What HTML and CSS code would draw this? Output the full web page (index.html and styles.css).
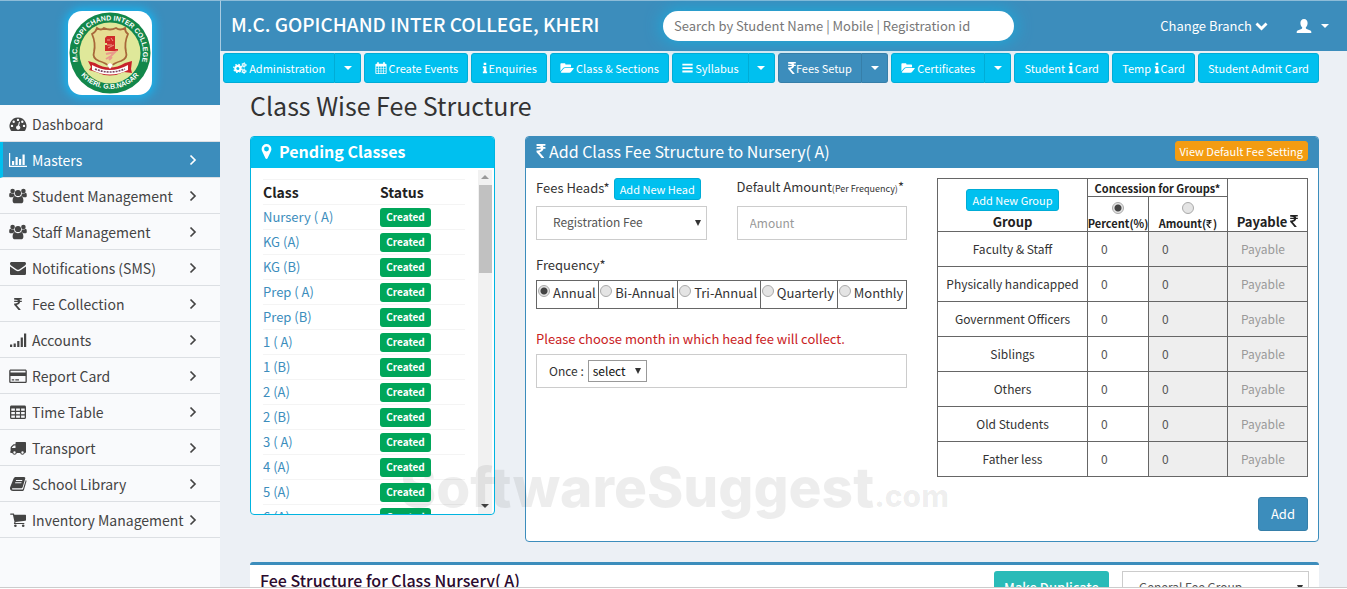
FILE: index.html
```
<!DOCTYPE html>
<html lang="en">
<head>
  <meta charset="UTF-8" />
  <meta name="viewport" content="width=device-width, initial-scale=1.0"/>
  <title>Class Wise Fee Structure</title>
  <link rel="stylesheet" href="styles.css">
</head>
<body>

  <!-- Icon set -->
  <svg class="sprite" aria-hidden="true">
    <symbol id="i-dashboard" viewBox="0 0 18 16"><path fill-rule="evenodd" d="M9 1.5a8.5 8.5 0 0 0-7.2 13c.2.3.4.5.8.5h12.800c.4 0 .6-.2.800-.5A8.500 8.500 0 0 0 9 1.500zM9 2.700a1.200 1.200 0 1 1 0 2.400 1.200 1.200 0 0 1 0-2.400zM4.700 4.500a1.200 1.200 0 1 1 0 2.400 1.200 1.200 0 0 1 0-2.400zM13.300 4.500a1.200 1.200 0 1 1 0 2.400 1.200 1.200 0 0 1 0-2.400zM3 8.700a1.200 1.200 0 1 1 0 2.400 1.200 1.200 0 0 1 0-2.400zM15 8.700a1.200 1.200 0 1 1 0 2.400 1.200 1.200 0 0 1 0-2.400zM10 5.600l1 .3-.9 3.800a2.100 2.100 0 1 1-1.100-.2z"/></symbol>
    <symbol id="i-chart" viewBox="0 0 18 16"><path d="M0 1h1.200v12.800H18V15H0zM3 9h2.200v4H3zM6.500 5h2.200v8H6.500zM10 7h2.200v6H10zM13.500 2.500h2.200V13h-2.200z"/></symbol>
    <symbol id="i-users" viewBox="0 0 18 16"><circle cx="3.600" cy="3" r="2.300"/><circle cx="14.400" cy="3" r="2.300"/><circle cx="9" cy="5" r="3.100"/><path d="M5.200 5.600A4 4 0 0 0 6 8.300c-1 0-1.800.4-2.400 1H2C.8 9.300.2 8.700.2 7.700c0-1.700.3-3 1.300-3 .4 0 1 .8 2.100.8zM12.800 5.600A4 4 0 0 1 12 8.300c1 0 1.800.4 2.400 1H16c1.200 0 1.800-.6 1.800-1.600 0-1.700-.3-3-1.300-3-.4 0-1 .8-2.100.8zM6.300 8.300c.4 0 1.200 1 2.700 1s2.300-1 2.700-1c2 0 2.700 2 2.700 4.400 0 1.700-1 2.600-2.400 2.600H6c-1.400 0-2.400-.9-2.400-2.600 0-2.400.7-4.400 2.700-4.400z"/></symbol>
    <symbol id="i-mail" viewBox="0 0 18 16"><path d="M1 3.600C1 2.700 1.700 2 2.600 2h12.800c.9 0 1.600.7 1.600 1.600 0 .9-.6 1.700-1.400 2.200l-5 3.500c-1 .7-2.200.7-3.200 0l-5-3.500C1.600 5.300 1 4.500 1 3.600zM1 6.500l5.900 4.100c1.300.9 2.900.9 4.200 0L17 6.500v6.900c0 .9-.7 1.600-1.600 1.600H2.600c-.9 0-1.600-.7-1.600-1.600z"/></symbol>
    <symbol id="i-rupee" viewBox="0 128 900 1408"><path d="M898 470v102q0 14-9 23t-23 9h-168q-23 144-129 234t-276 110q167 178 459 536 14 16 4 34-8 18-29 18h-195q-16 0-25-12-306-367-498-571-9-9-9-22v-127q0-13 9.500-22.500t22.500-9.500h112q132 0 212.500-43t102.500-125h-427q-14 0-23-9t-9-23v-102q0-14 9-23t23-9h413q-57-113-268-113h-145q-13 0-22.500-9.500t-9.500-22.500v-133q0-14 9-23t23-9h832q14 0 23 9t9 23v102q0 14-9 23t-23 9h-233q47 61 64 144h171q14 0 23 9t9 23z"/></symbol>
    <symbol id="i-signal" viewBox="0 0 18 16"><path d="M1 12.500h2.200V15H1zM4.600 11.500h2.200V15H4.600zM8.200 9h2.200v6H8.200zM11.700 5.500h2.200V15h-2.200zM15 1.500h2.200V15H15z"/></symbol>
    <symbol id="i-card" viewBox="0 0 18 16"><path fill-rule="evenodd" d="M1.800 1.500h14.400c.9 0 1.600.7 1.600 1.600v10.300c0 .9-.7 1.600-1.600 1.600H1.800c-.9 0-1.600-.7-1.600-1.600V3.100c0-.9.700-1.600 1.600-1.600zM1.500 2.800v1.700h15V2.800zM1.500 8v5.700h15V8zM2.700 11.300h2.500v1.200H2.700zM6.300 11.300H10v1.200H6.300z"/></symbol>
    <symbol id="i-table" viewBox="0 0 18 16"><path fill-rule="evenodd" d="M2.500 1.500h13c.9 0 1.500.6 1.500 1.500v10.500c0 .9-.6 1.500-1.500 1.500h-13c-.9 0-1.500-.6-1.500-1.500V3c0-.9.600-1.500 1.500-1.500zM2.300 4.600v2.200h3.600V4.600zM7.100 4.600v2.200h3.800V4.600zM12.100 4.600v2.200h3.600V4.600zM2.300 8v2.200h3.600V8zM7.100 8v2.200h3.800V8zM12.100 8v2.200h3.600V8zM2.300 11.400v2.300h3.600v-2.300zM7.100 11.400v2.300h3.800v-2.300zM12.100 11.400v2.300h3.600v-2.300z"/></symbol>
    <symbol id="i-truck" viewBox="0 0 18 16"><path fill-rule="evenodd" d="M7.500 2H16c.6 0 1 .4 1 1v9c0 .7-.5.900-1.300.9a2.300 2.300 0 0 1-4.500 0H7.800a2.300 2.300 0 0 1-4.500 0c-1 0-2.300 0-2.300-.9 0-.4.600-.5.600-.7V8c0-.5.200-1 .6-1.400l1.800-1.800c.4-.4.800-.5 1.300-.5h1.200V3c0-.6.400-1 1-1zM2.900 8h3.600V5.500H5.200c-.3 0-.4.100-.5.200L3.100 7.300c-.2.200-.2.400-.2.700zM5.500 11.300a1.200 1.200 0 1 0 0 2.400 1.200 1.200 0 0 0 0-2.400zM13.500 11.300a1.200 1.200 0 1 0 0 2.400 1.200 1.200 0 0 0 0-2.400z"/></symbol>
    <symbol id="i-book" viewBox="0 0 18 16"><path fill-rule="evenodd" d="M6.800 1h8.300c.9 0 1.400.8 1.100 1.700l-2.500 8.200c-.2.800-.9 1.300-1.700 1.300H3.500c-.4 0-.6.400-.5.700.2.500.6.700 1.300.7h8.900c.4 0 .7-.2.800-.6l2.800-9.100c.6.300.8 1 .6 1.700L15 13.700c-.2.800-1 1.300-1.800 1.300H4c-1.400 0-2.700-1-3-2.300-.1-.6 0-1 .2-1.600L4.600 2.600C4.900 1.600 5.800 1 6.800 1zM7.100 4l-.3 1h6.300l.3-1zM6.300 6.200l-.3 1h6.300l.3-1z"/></symbol>
    <symbol id="i-cart" viewBox="0 0 18 16"><path d="M1.700 1.500h2.700c.6 0 .8.500.9 1.300h11.100c.4 0 .6.300.6.700v4.600c0 .4-.3.700-.6.700L6.400 10c.1.300.1.600 0 .9h8.400c.9 0 .9 1.200 0 1.200H5.600c-.7 0-.8-.5-.6-1l.5-1.200L3.900 2.700H1.700c-.9 0-.9-1.200 0-1.200z"/><circle cx="6.400" cy="13.800" r="1.300"/><circle cx="14.200" cy="13.800" r="1.300"/></symbol>
    <symbol id="i-right" viewBox="0 0 8 12"><path d="M1.500 1.500L6 6l-4.500 4.500" fill="none" stroke="currentColor" stroke-width="1.700"/></symbol>
    <symbol id="i-cogs" viewBox="0 0 16 14"><g fill="none" stroke="currentColor"><circle cx="5.500" cy="7.500" r="3" stroke-width="2.400"/><circle cx="5.500" cy="7.500" r="4.700" stroke-width="1.500" stroke-dasharray="1.850 1.840"/><circle cx="12.600" cy="3.500" r="1.500" stroke-width="1.500"/><circle cx="12.600" cy="3.500" r="2.600" stroke-width="1" stroke-dasharray="1.360"/><circle cx="12.600" cy="10.800" r="1.500" stroke-width="1.500"/><circle cx="12.600" cy="10.800" r="2.600" stroke-width="1" stroke-dasharray="1.360"/></g></symbol>
    <symbol id="i-calendar" viewBox="0 0 14 14"><path fill-rule="evenodd" d="M1.500 2h1V1c0-1.200 2-1.200 2 0v1h5V1c0-1.200 2-1.200 2 0v1h1c.6 0 1 .4 1 1v10c0 .6-.4 1-1 1h-11c-.6 0-1-.4-1-1V3c0-.6.400-1 1-1zM1.500 5.300v1.900h2V5.300zM4.300 5.300v1.900h2.300V5.300zM7.400 5.300v1.900h2.300V5.300zM10.500 5.300v1.900h2V5.300zM1.500 8v2.100h2V8zM4.300 8v2.100h2.300V8zM7.400 8v2.100h2.300V8zM10.500 8v2.100h2V8zM1.500 10.900V13h2v-2.100zM4.300 10.900V13h2.300v-2.100zM7.400 10.900V13h2.300v-2.100zM10.500 10.900V13h2v-2.100z"/></symbol>
    <symbol id="i-info" viewBox="0 0 6 14"><path d="M1.500 1h3v2.600h-3zM.5 5h4v6h1v2h-5v-2h1V7h-1z"/></symbol>
    <symbol id="i-folder" viewBox="0 0 16 14"><path d="M1.500 1.500h3.500c.7 0 1.200.5 1.200 1.200V3h5.300c.7 0 1.200.5 1.200 1.200V6H5.600c-.8 0-1.600.4-2.100 1L.3 10.800V2.700c0-.7.500-1.200 1.200-1.200zM5.600 7h9.600c.7 0 .9.400.5.900l-3 3.800c-.4.500-1.100.8-1.700.8H1.400c-.6 0-.9-.4-.4-1l3-3.700c.4-.5 1-.8 1.600-.8z"/></symbol>
    <symbol id="i-bars" viewBox="0 0 12 14"><path d="M0 2h12v2.200H0zM0 6h12v2.200H0zM0 10h12v2.200H0z"/></symbol>
    <symbol id="i-pin" viewBox="0 0 10 16"><path fill-rule="evenodd" d="M5 1a4.600 4.600 0 0 1 4.600 4.600c0 .7-.1 1.300-.4 1.900L6 14.300c-.4.900-1.600.9-2 0L.8 7.500C.5 6.900.4 6.300.4 5.600A4.600 4.600 0 0 1 5 1zM5 3.300a2.300 2.300 0 1 0 0 4.600 2.300 2.300 0 0 0 0-4.600z"/></symbol>
    <symbol id="i-down" viewBox="0 0 14 14"><path d="M2.300 3L7 7.700 11.700 3 14 5.300l-7 7-7-7z"/></symbol>
    <symbol id="i-user" viewBox="0 0 16 16"><path d="M8 1c2.300 0 3.600 1.700 3.600 4 0 1.700-.7 3.300-1.700 4.200-.3.800 0 1.300.8 1.700l3.600 1.600c.7.300 1 .8 1 1.600v.9H.7v-.9c0-.8.300-1.300 1-1.600l3.600-1.600c.8-.4 1.100-.9.8-1.700C5.100 8.300 4.400 6.700 4.400 5c0-2.300 1.300-4 3.600-4z"/></symbol>
    <symbol id="i-caret" viewBox="0 0 8 4"><path d="M0 0h8L4 4z"/></symbol>
  </svg>

  <div class="page">

    <!-- Sidebar -->
    <aside class="sidebar">
      <div class="brand">
        <svg class="logo" viewBox="0 0 84 84" role="img" aria-label="College logo">
          <defs>
            <path id="arc-top" d="M11 53.600A33 33 0 1 1 73 53.600"/>
            <path id="arc-bottom" d="M6 52A38 38 0 0 0 78 52"/>
          </defs>
          <circle cx="42" cy="42" r="40.500" fill="#12874a"/>
          <circle cx="42" cy="42" r="30.500" fill="#dfe89a"/>
          <text class="logo-text"><textPath href="#arc-top" startOffset="50%" text-anchor="middle">M.C. GOPI CHAND INTER COLLEGE</textPath></text>
          <text class="logo-text"><textPath href="#arc-bottom" startOffset="50%" text-anchor="middle">KHERI. G.B.NAGAR</textPath></text>
          <path d="M29 17q4 3 7 0q6 3 12 0q4 3 9 0q0 4 3 6q-4 9-2 18q2 6-5 9q-7 2-11 6q-4-4-11-6q-7-3-5-9q2-9-2-18q4-2 5-6z" fill="#e6dc92" stroke="#a8683a" stroke-width="1.800"/>
          <path d="M37 27l2-2h8v13h3v2H37v-6h2v-2h-2z" fill="#cf2a2a"/>
          <path d="M39 29h3M43 27l2 3M39 34h5M40 37l6-3" stroke="#eba08a" fill="none"/>
          <path d="M38 43l9-2-4 4-5 3M41 49l3-3" stroke="#e99a8c" stroke-width="2" fill="none"/>
          <path d="M20 50l7 2q15 9 30 0l7-2-1 8 1 4-8-1q-14 7-28 0l-7-2 2-3z" fill="#c7222c"/>
          <path d="M24 54q18 10 36 0v5q-18 9-36 0z" fill="#fff"/>
          <path d="M27 58q15 6 30 0" fill="none" stroke="#7b4562" stroke-width="1.600" stroke-dasharray="2 1"/>
          <path d="M39 54l3-2 3 2-3 4z" fill="#fff"/>
        </svg>
      </div>
      <nav class="menu">
        <a href="#"><svg class="icon"><use href="#i-dashboard"/></svg>Dashboard</a>
        <a href="#" class="active"><svg class="icon"><use href="#i-chart"/></svg>Masters<svg class="arrow"><use href="#i-right"/></svg></a>
        <a href="#"><svg class="icon"><use href="#i-users"/></svg>Student Management<svg class="arrow"><use href="#i-right"/></svg></a>
        <a href="#"><svg class="icon"><use href="#i-users"/></svg>Staff Management<svg class="arrow"><use href="#i-right"/></svg></a>
        <a href="#"><svg class="icon"><use href="#i-mail"/></svg>Notifications (SMS)<svg class="arrow"><use href="#i-right"/></svg></a>
        <a href="#"><svg class="icon small"><use href="#i-rupee"/></svg>Fee Collection<svg class="arrow"><use href="#i-right"/></svg></a>
        <a href="#"><svg class="icon"><use href="#i-signal"/></svg>Accounts<svg class="arrow"><use href="#i-right"/></svg></a>
        <a href="#"><svg class="icon"><use href="#i-card"/></svg>Report Card<svg class="arrow"><use href="#i-right"/></svg></a>
        <a href="#"><svg class="icon"><use href="#i-table"/></svg>Time Table<svg class="arrow"><use href="#i-right"/></svg></a>
        <a href="#"><svg class="icon"><use href="#i-truck"/></svg>Transport<svg class="arrow"><use href="#i-right"/></svg></a>
        <a href="#"><svg class="icon"><use href="#i-book"/></svg>School Library<svg class="arrow"><use href="#i-right"/></svg></a>
        <a href="#"><svg class="icon"><use href="#i-cart"/></svg>Inventory Management<svg class="arrow"><use href="#i-right"/></svg></a>
      </nav>
    </aside>

    <div class="main">
      <!-- Top bar -->
      <header class="topbar">
        <div class="college">M.C. GOPICHAND INTER COLLEGE, KHERI</div>
        <input class="search" type="text" aria-label="Search students" placeholder="Search by Student Name | Mobile | Registration id">
        <div class="account">
          <a href="#">Change Branch <svg class="chev"><use href="#i-down"/></svg></a>
          <a href="#" aria-label="Account"><svg class="user"><use href="#i-user"/></svg><svg class="caret"><use href="#i-caret"/></svg></a>
        </div>
      </header>

      <!-- Shortcut buttons -->
      <nav class="shortcuts">
        <div class="split"><button><svg class="w16"><use href="#i-cogs"/></svg>Administration</button><button class="drop" aria-label="More administration"><svg class="caret"><use href="#i-caret"/></svg></button></div>
        <button><svg class="w14"><use href="#i-calendar"/></svg>Create Events</button>
        <button><svg class="w6"><use href="#i-info"/></svg>Enquiries</button>
        <button><svg class="w16"><use href="#i-folder"/></svg>Class &amp; Sections</button>
        <div class="split"><button><svg class="w12"><use href="#i-bars"/></svg>Syllabus</button><button class="drop" aria-label="More syllabus"><svg class="caret"><use href="#i-caret"/></svg></button></div>
        <div class="split current"><button><svg class="w8"><use href="#i-rupee"/></svg>Fees Setup</button><button class="drop" aria-label="More fees setup"><svg class="caret"><use href="#i-caret"/></svg></button></div>
        <div class="split"><button><svg class="w16"><use href="#i-folder"/></svg>Certificates</button><button class="drop" aria-label="More certificates"><svg class="caret"><use href="#i-caret"/></svg></button></div>
        <button>Student&nbsp;<svg class="w6"><use href="#i-info"/></svg>Card</button>
        <button>Temp&nbsp;<svg class="w6"><use href="#i-info"/></svg>Card</button>
        <button>Student Admit Card</button>
      </nav>

      <main class="content">
        <h1>Class Wise Fee Structure</h1>

        <div class="panels">
          <section class="panel pending">
            <h2><svg class="pin"><use href="#i-pin"/></svg>Pending Classes</h2>
            <div class="scroll">
              <div class="list">
                <table class="classes">
                  <thead><tr><th>Class</th><th>Status</th></tr></thead>
                  <tbody>
                    <tr><td><a href="#">Nursery ( A)</a></td><td><span class="badge">Created</span></td></tr>
                    <tr><td><a href="#">KG (A)</a></td><td><span class="badge">Created</span></td></tr>
                    <tr><td><a href="#">KG (B)</a></td><td><span class="badge">Created</span></td></tr>
                    <tr><td><a href="#">Prep ( A)</a></td><td><span class="badge">Created</span></td></tr>
                    <tr><td><a href="#">Prep (B)</a></td><td><span class="badge">Created</span></td></tr>
                    <tr><td><a href="#">1 ( A)</a></td><td><span class="badge">Created</span></td></tr>
                    <tr><td><a href="#">1 (B)</a></td><td><span class="badge">Created</span></td></tr>
                    <tr><td><a href="#">2 (A)</a></td><td><span class="badge">Created</span></td></tr>
                    <tr><td><a href="#">2 (B)</a></td><td><span class="badge">Created</span></td></tr>
                    <tr><td><a href="#">3 ( A)</a></td><td><span class="badge">Created</span></td></tr>
                    <tr><td><a href="#">4 (A)</a></td><td><span class="badge">Created</span></td></tr>
                    <tr><td><a href="#">5 (A)</a></td><td><span class="badge">Created</span></td></tr>
                    <tr><td><a href="#">6 (A)</a></td><td><span class="badge">Created</span></td></tr>
                  </tbody>
                </table>
              </div>
              <div class="track">
                <svg class="up"><use href="#i-caret"/></svg>
                <div class="thumb"></div>
                <svg class="down"><use href="#i-caret"/></svg>
              </div>
            </div>
          </section>

          <section class="panel fees">
            <h2><svg class="rupee"><use href="#i-rupee"/></svg>Add Class Fee Structure to Nursery( A)<button class="btn orange">View Default Fee Setting</button></h2>
            <form class="fee-form">
              <div class="left">
                <div class="pair">
                  <div>
                    <div class="label-row"><label for="head">Fees Heads*</label><button type="button" class="btn">Add New Head</button></div>
                    <div class="pick"><select id="head" class="control"><option>Registration Fee</option></select></div>
                  </div>
                  <div>
                    <div class="label-row"><label for="amount">Default Amount<small>(Per Frequency)</small>*</label></div>
                    <input id="amount" class="control" type="text" placeholder="Amount">
                  </div>
                </div>
                <div class="label-row freq-label" id="freq">Frequency*</div>
                <div class="frequency" role="radiogroup" aria-labelledby="freq">
                  <label><input type="radio" name="freq" checked>Annual</label>
                  <label><input type="radio" name="freq">Bi-Annual</label>
                  <label><input type="radio" name="freq">Tri-Annual</label>
                  <label><input type="radio" name="freq">Quarterly</label>
                  <label><input type="radio" name="freq">Monthly</label>
                </div>
                <p class="warning">Please choose month in which head fee will collect.</p>
                <div class="once"><label for="month">Once :</label><div class="pick month"><select id="month"><option>select</option></select></div></div>
              </div>

              <div class="right">
                <table class="groups">
                  <colgroup><col class="col-group"><col class="col-percent"><col><col class="col-pay"></colgroup>
                  <thead>
                    <tr><th rowspan="2"><button type="button" class="btn">Add New Group</button><br>Group</th><th colspan="2" class="mini">Concession for Groups*</th><th rowspan="2">Payable <svg class="w8"><use href="#i-rupee"/></svg></th></tr>
                    <tr class="modes"><th class="mini"><label><input type="radio" name="mode" checked>Percent(%)</label></th><th class="mini"><label><input type="radio" name="mode"><span>Amount(<svg class="w6 tiny"><use href="#i-rupee"/></svg>)</span></label></th></tr>
                  </thead>
                  <tbody>
                    <tr><td>Faculty &amp; Staff</td><td><input aria-label="Percent" value="0"></td><td class="off"><input aria-label="Amount" value="0" disabled></td><td class="off"><input aria-label="Payable" placeholder="Payable" disabled></td></tr>
                    <tr><td>Physically handicapped</td><td><input aria-label="Percent" value="0"></td><td class="off"><input aria-label="Amount" value="0" disabled></td><td class="off"><input aria-label="Payable" placeholder="Payable" disabled></td></tr>
                    <tr><td>Government Officers</td><td><input aria-label="Percent" value="0"></td><td class="off"><input aria-label="Amount" value="0" disabled></td><td class="off"><input aria-label="Payable" placeholder="Payable" disabled></td></tr>
                    <tr><td>Siblings</td><td><input aria-label="Percent" value="0"></td><td class="off"><input aria-label="Amount" value="0" disabled></td><td class="off"><input aria-label="Payable" placeholder="Payable" disabled></td></tr>
                    <tr><td>Others</td><td><input aria-label="Percent" value="0"></td><td class="off"><input aria-label="Amount" value="0" disabled></td><td class="off"><input aria-label="Payable" placeholder="Payable" disabled></td></tr>
                    <tr><td>Old Students</td><td><input aria-label="Percent" value="0"></td><td class="off"><input aria-label="Amount" value="0" disabled></td><td class="off"><input aria-label="Payable" placeholder="Payable" disabled></td></tr>
                    <tr><td>Father less</td><td><input aria-label="Percent" value="0"></td><td class="off"><input aria-label="Amount" value="0" disabled></td><td class="off"><input aria-label="Payable" placeholder="Payable" disabled></td></tr>
                  </tbody>
                </table>
                <button type="button" class="add">Add</button>
              </div>
            </form>
          </section>
          <div class="watermark">SoftwareSuggest<span>.com</span></div>
        </div>

        <section class="structure">
          <h3>Fee Structure for Class Nursery( A)</h3>
          <button class="duplicate">Make Duplicate</button>
          <div class="pick group-pick"><select class="control" aria-label="Fee group"><option>General Fee Group</option></select></div>
        </section>
      </main>
    </div>
  </div>

</body>
</html>
```
FILE: styles.css
```
* {
  box-sizing: border-box;
}

body {
  margin: 0;
  height: 100vh;
  overflow: hidden;
  background: #fff;
  color: #333;
  font-family: "Noto Sans CJK SC", "Noto Sans", sans-serif;
  font-size: 13px;
  line-height: 18px;
}

button, input, select {
  font: inherit;
  color: inherit;
}

button {
  cursor: pointer;
}

a {
  color: #3c8dbc;
  text-decoration: none;
}

svg {
  fill: currentColor;
  flex-shrink: 0;
}

.sprite {
  display: none;
}

.page {
  display: flex;
  height: calc(100vh - 1px);
  overflow: hidden;
  background: #ecf0f5;
  border-bottom: 1px solid #ccc;
}

/* Sidebar */
.sidebar {
  width: 220px;
  flex-shrink: 0;
  background: #f9fafc;
}

.brand {
  height: 105px;
  margin-bottom: 1px;
  padding-top: 10px;
  display: flex;
  justify-content: center;
  align-items: flex-start;
  background: #3c8dbc;
  border-top: 1px solid #8dbcd8;
}

.logo {
  width: 84px;
  height: 84px;
  background: #fff;
  border-radius: 14px;
  box-shadow: 0 0 10px 3px #17b4ee;
}

.logo-text {
  font: bold 7px "Liberation Sans", sans-serif;
  fill: #fff;
}

.menu a {
  display: flex;
  align-items: center;
  height: 36px;
  padding-left: 9px;
  padding-right: 23px;
  font-size: 14px;
  color: #444;
  border-bottom: 1px solid #dcdfe3;
  white-space: nowrap;
}

.menu a.active {
  background: #3c8dbc;
  color: #fff;
  padding-left: 6px;
  border-left: 3px solid #00c0ef;
}

.icon {
  width: 18px;
  height: 16px;
  margin-right: 5px;
}

.icon.small {
  height: 12px;
}

.arrow {
  width: 8px;
  height: 12px;
  margin-left: auto;
}

/* Top bar */
.main {
  flex: 1;
  min-width: 0;
}

.topbar {
  height: 51px;
  padding: 0 18px 0 10px;
  display: flex;
  align-items: center;
  background: #3c8dbc;
  border-top: 1px solid #8dbcd8;
  border-left: 1px solid #a9cce2;
  color: #fff;
}

.college {
  width: 432px;
  padding-bottom: 4px;
  font-size: 19px;
  font-weight: 500;
  white-space: nowrap;
}

.search {
  width: 351px;
  height: 30px;
  padding: 0 11px 2px;
  border: 0;
  border-radius: 15px;
  background: #fff;
  box-shadow: 0 0 16px 2px #1ea8d8;
}

.search::placeholder {
  color: #777;
}

.account {
  margin-left: auto;
  display: flex;
  gap: 28px;
}

.account a {
  display: flex;
  align-items: center;
  color: #fff;
}

.chev {
  width: 13px;
  height: 12px;
  margin-left: 3px;
}

.user {
  width: 16px;
  height: 16px;
  margin-right: 9px;
}

.caret {
  width: 8px;
  height: 4px;
}

/* Shortcut buttons */
.shortcuts {
  display: flex;
  gap: 3px;
  padding: 2px 28px 0 3px;
}

.shortcuts > * {
  flex: 1 1 auto;
}

.split {
  display: flex;
}

.shortcuts button {
  display: flex;
  flex: 1 1 auto;
  align-items: center;
  justify-content: center;
  height: 30px;
  padding: 0 8px;
  border: 1px solid #00acd6;
  border-radius: 3px;
  background: #00c0ef;
  color: #fff;
  font-size: 11px;
  white-space: nowrap;
}

.split button:first-child {
  border-radius: 3px 0 0 3px;
}

.shortcuts .drop {
  flex: 0 0 26px;
  border-left: 0;
  border-radius: 0 3px 3px 0;
}

.shortcuts .current button {
  background: #3c8dbc;
  border-color: #367fa9;
}

.shortcuts svg {
  height: 12px;
}

.shortcuts svg.caret {
  height: 4px;
}

.w16 {
  width: 14px;
  margin-right: 2px;
}

.w14 {
  width: 12px;
  margin-right: 2px;
}

.w12 {
  width: 11px;
  margin-right: 2px;
}

.w8 {
  width: 8px;
  height: 12px;
}

.w6 {
  width: 6px;
  margin-right: 1px;
}

/* Content */
.content {
  padding: 6px 28px 0 30px;
}

h1 {
  margin: 0 0 15px;
  font-size: 25px;
  font-weight: 400;
  line-height: 32px;
}

.panels {
  position: relative;
  display: grid;
  grid-template-columns: 245px 1fr;
  gap: 30px;
  align-items: start;
}

.panel {
  border: 1px solid #3c8dbc;
  border-radius: 4px;
  background: #fff;
  overflow: hidden;
}

.panel h2 {
  display: flex;
  align-items: center;
  height: 31px;
  margin: 0;
  padding: 0 10px 3px;
  background: #3c8dbc;
  color: #fff;
  font-size: 16px;
  font-weight: 400;
}

.pending {
  border-color: #00b4e0;
}

.panel.pending h2 {
  background: #00c0ef;
  font-weight: 700;
}

.pin {
  width: 11px;
  height: 17px;
  margin-right: 7px;
}

.rupee {
  width: 10px;
  height: 14px;
  margin-right: 3px;
}

.scroll {
  display: flex;
  height: 346px;
  padding: 2px 2px 0 12px;
}

.list {
  flex: 1;
  padding: 9px 13px 0 0;
  overflow: hidden;
}

.classes {
  width: 100%;
  border-collapse: collapse;
  font-size: 13px;
}

.classes th,
.classes td {
  height: 25px;
  padding: 0;
  text-align: left;
  border-top: 1px solid #f4f4f4;
}

.classes th {
  font-size: 14px;
  color: #222;
}

.classes th:first-child {
  width: 117px;
}

.badge {
  display: block;
  position: relative;
  z-index: 1;
  width: 51px;
  height: 19px;
  border-radius: 3px;
  background: #00a65a;
  color: #fff;
  font-size: 10px;
  font-weight: 700;
  line-height: 18px;
  text-align: center;
}

.track {
  display: flex;
  flex-direction: column;
  align-items: center;
  width: 14px;
  padding: 5px 0 6px;
  background: #f1f1f1;
}

.track svg {
  width: 8px;
  height: 4px;
  color: #444;
}

.track .up {
  transform: rotate(180deg);
  color: #999;
}

.track .down {
  margin-top: auto;
}

.thumb {
  width: 13px;
  height: 88px;
  margin-top: 6px;
  background: #c1c1c1;
}

/* Fee form */
.btn {
  height: 22px;
  padding: 0 5px;
  border: 1px solid #00acd6;
  border-radius: 3px;
  background: #00c0ef;
  color: #fff;
  font-size: 11px;
  font-weight: 400;
  line-height: 18px;
  white-space: nowrap;
}

.btn.orange {
  height: 20px;
  margin-left: auto;
  padding: 0 4px;
  border-color: #f39c12;
  background: #f39c12;
}

.fee-form {
  display: grid;
  grid-template-columns: 1fr 1fr;
  gap: 30px;
  padding: 10px;
}

.pair {
  display: grid;
  grid-template-columns: 1fr 1fr;
  gap: 30px;
}

.label-row {
  display: flex;
  align-items: center;
  gap: 4px;
  height: 22px;
  margin-bottom: 6px;
  font-size: 13px;
  white-space: nowrap;
}

.label-row label {
  padding-bottom: 2px;
}

.label-row small {
  font-size: 9px;
}

.control {
  display: block;
  width: 100%;
  height: 34px;
  padding: 0 12px 2px;
  border: 1px solid #ccc;
  border-radius: 0;
  background: #fff;
  color: #555;
  font-size: 12px;
}

.control::placeholder,
.groups input::placeholder {
  color: #999;
  opacity: 1;
}

.pick {
  position: relative;
}

.pick select {
  appearance: none;
  padding-left: 16px;
}

.pick::after {
  content: "";
  position: absolute;
  right: 6px;
  top: 50%;
  margin-top: -3px;
  border: 3px solid transparent;
  border-top: 6px solid #333;
  border-bottom: 0;
}

.freq-label {
  margin: 14px 0 4px;
}

.frequency {
  display: flex;
  border: 1px solid #666;
}

.frequency label {
  display: flex;
  flex: 1 1 auto;
  gap: 3px;
  height: 27px;
  padding: 4px 1px;
  border-right: 1px solid #666;
  font-size: 13px;
  line-height: 16px;
  white-space: nowrap;
}

.frequency label:last-child {
  border-right: 0;
}

input[type="radio"] {
  appearance: none;
  width: 12px;
  height: 12px;
  margin: 0;
  flex-shrink: 0;
  border: 1px solid #aaa;
  border-radius: 50%;
  background: #e4e4e4;
}

input[type="radio"]:checked {
  background: radial-gradient(circle, #444 0 3px, #e4e4e4 4px);
}

.warning {
  margin: 21px 0 6px;
  color: #c9211e;
  font-size: 13px;
}

.once {
  display: flex;
  align-items: center;
  gap: 4px;
  height: 34px;
  padding-left: 12px;
  border: 1px solid #ccc;
  font-size: 12px;
}

.month select {
  display: block;
  width: 59px;
  height: 22px;
  padding: 0 4px;
  border: 1px solid #999;
  border-radius: 0;
  background: #fff;
  color: #111;
}

/* Concession table */
.right {
  display: flex;
  flex-direction: column;
}

.groups {
  width: 100%;
  border-collapse: collapse;
  table-layout: fixed;
  font-size: 12px;
  text-align: center;
}

.groups th,
.groups td {
  padding: 0;
  border: 1px solid #666;
}

.groups th {
  vertical-align: bottom;
  font-size: 13px;
  color: #222;
}

.groups th .btn {
  margin-bottom: 2px;
}

.col-group {
  width: 150px;
}

.col-percent {
  width: 61px;
}

.col-pay {
  width: 80px;
}

.groups .mini {
  height: 18px;
  font-size: 11px;
  line-height: 16px;
}

.groups .modes .mini {
  height: 35px;
  white-space: nowrap;
}

.modes label {
  display: flex;
  flex-direction: column;
  align-items: center;
  gap: 1px;
}

.groups td {
  height: 35px;
}

.groups td input {
  display: block;
  width: 100%;
  height: 34px;
  padding: 0 13px 2px;
  border: 0;
  background: transparent;
  color: #555;
}

.groups .off {
  background: #eee;
}

.tiny {
  height: 8px;
}

.add {
  align-self: flex-end;
  height: 34px;
  margin-top: 20px;
  padding: 0 12px;
  border: 1px solid #367fa9;
  border-radius: 3px;
  background: #3c8dbc;
  color: #fff;
  font-size: 13px;
}

/* Vendor mark over the panels */
.watermark {
  position: absolute;
  left: 150px;
  bottom: 16px;
  color: rgba(0, 0, 0, 0.07);
  font-family: Inter, sans-serif;
  font-size: 55px;
  font-weight: 800;
  line-height: 60px;
  pointer-events: none;
}

.watermark span {
  font-size: 30px;
}

/* Existing structure */
.structure {
  display: flex;
  gap: 13px;
  margin-top: 20px;
  padding: 6px 10px;
  border-top: 3px solid #3c8dbc;
  border-radius: 3px;
  background: #fff;
}

.structure h3 {
  flex: 1;
  margin: 0;
  color: #2b0a2e;
  font-size: 16px;
  font-weight: 500;
}

.duplicate {
  width: 115px;
  height: 34px;
  border: 0;
  border-radius: 3px;
  background: #2abbb8;
  color: #fff;
  font-size: 13px;
  font-weight: 500;
}

.group-pick {
  width: 187px;
}
```
